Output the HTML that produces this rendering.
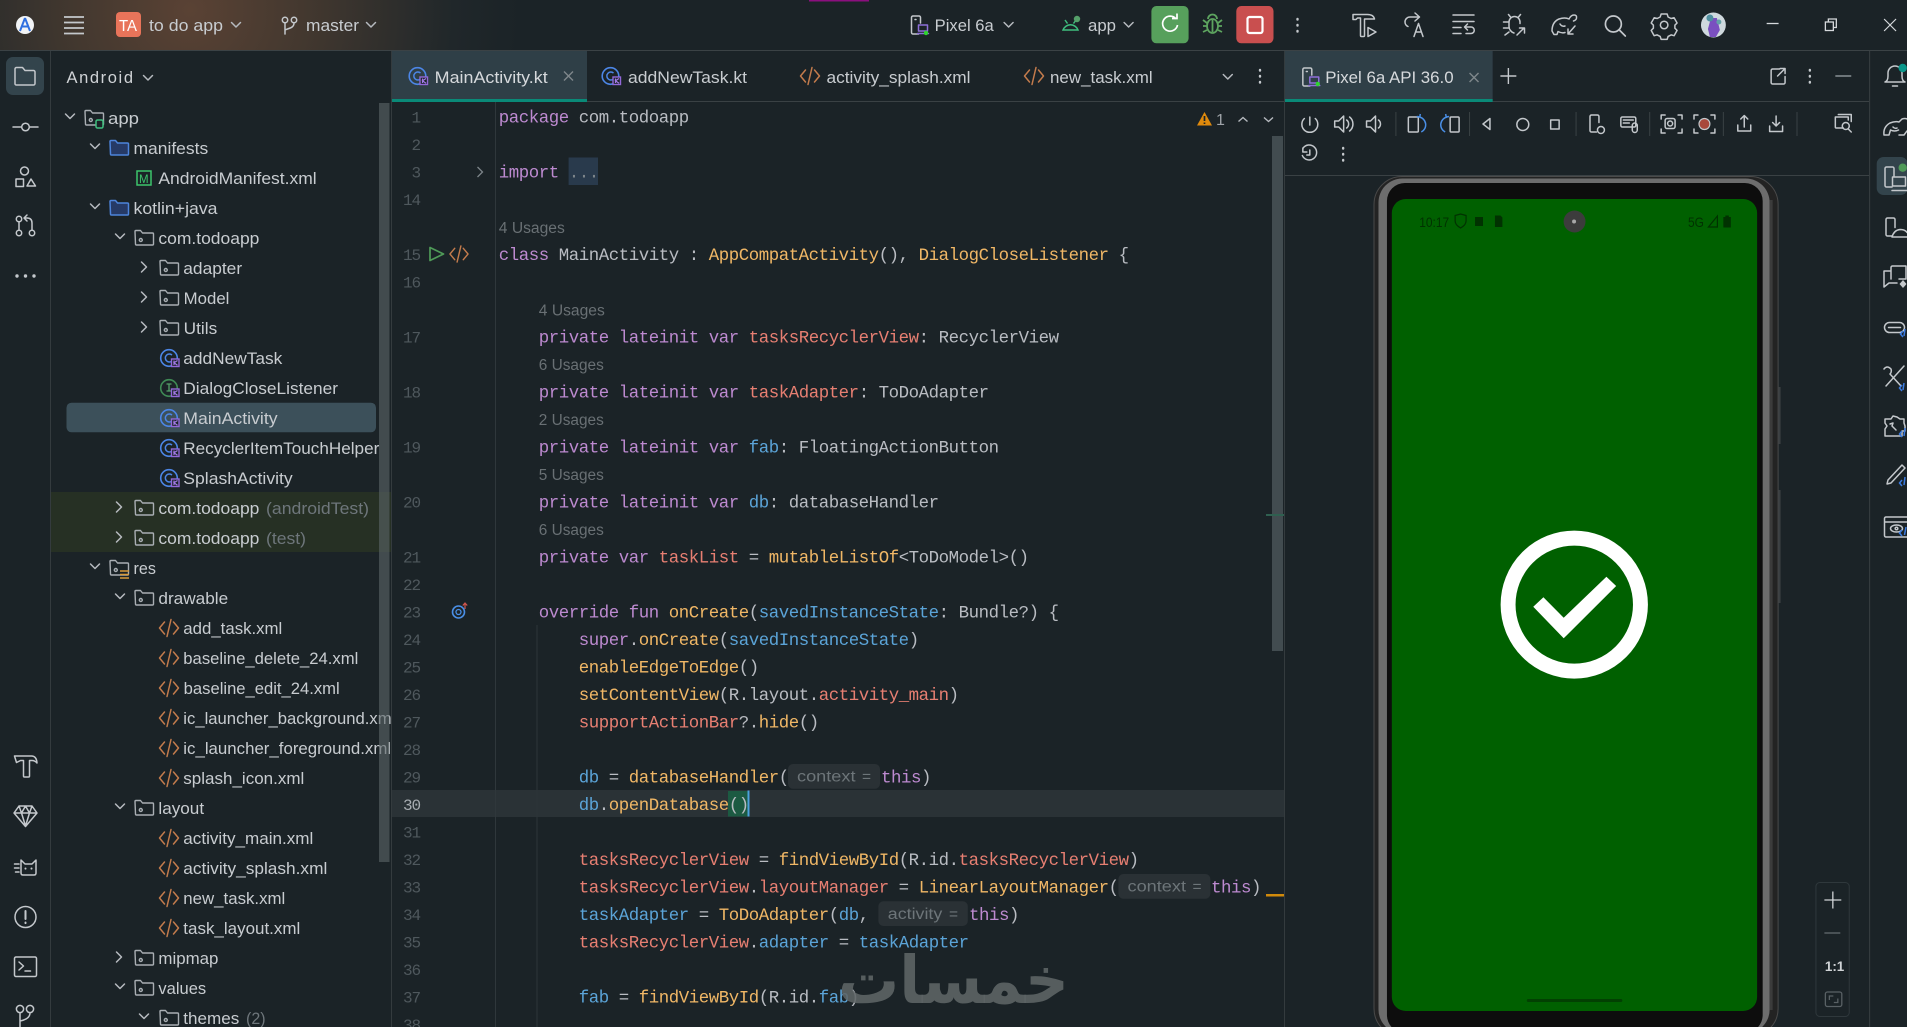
<!DOCTYPE html>
<html><head><meta charset="utf-8"><title>Android Studio</title>
<style>
html,body{margin:0;padding:0;background:#1b2327;width:1907px;height:1027px;overflow:hidden}
svg{display:block;position:absolute;left:0;top:0}
text{white-space:pre}
.u{font-family:"Liberation Sans",sans-serif;font-size:16.5px;fill:#c8ccd0}
.g{font-family:"Liberation Sans",sans-serif;font-size:16.5px;fill:#6e767b}
.m{font-family:"Liberation Mono",monospace;font-size:17.4px;letter-spacing:-.44px;fill:#b9bcc2}
.n{font-family:"Liberation Mono",monospace;font-size:16px;letter-spacing:-1.1px;fill:#4f585d;text-anchor:end}
.s{font-family:"Liberation Sans",sans-serif;font-size:15.5px;fill:#697074}
.h{font-family:"Liberation Sans",sans-serif;font-size:15.5px;fill:#6d7579}
.k{fill:#bd8ad0}.f{fill:#f0b766}.p{fill:#e77f72}.b{fill:#5ba4d8}
.i{fill:none;stroke:#c4c8cc;stroke-width:1.5;stroke-linecap:round;stroke-linejoin:round}
</style></head><body>
<svg width="1907" height="1027" viewBox="0 0 1907 1027" xmlns="http://www.w3.org/2000/svg">
<defs>
<radialGradient id="tb" gradientUnits="userSpaceOnUse" cx="190" cy="10" r="330">
<stop offset="0" stop-color="#5a4234"/><stop offset=".35" stop-color="#43382f"/><stop offset=".8" stop-color="#20272a"/><stop offset="1" stop-color="#1b2327"/></radialGradient>
<g id="pkg" fill="none" stroke="#a9aeb3" stroke-width="1.4" stroke-linejoin="round"><path d="M-9 -6.5a1 1 0 0 1 1-1h4.500l2 2.500h10a1 1 0 0 1 1 1v10a1 1 0 0 1-1 1h-16a1 1 0 0 1-1-1z"/><circle cx="-3.200" cy="2" r="1.500"/></g>
<g id="blue" stroke="#4d84db" stroke-width="1.500" fill="#263a66" stroke-linejoin="round"><path d="M-9 -6.500a1 1 0 0 1 1-1h4.500l2 2.500h10a1 1 0 0 1 1 1v10a1 1 0 0 1-1 1h-16a1 1 0 0 1-1-1z"/></g>
<g id="kc"><circle cx="-.5" cy="-1" r="8.300" fill="none" stroke="#4c86e6" stroke-width="1.600"/><path d="M2.500 -4a4 4 0 1 0 0 6" fill="none" stroke="#4c86e6" stroke-width="1.500"/><rect x="2" y="0" width="7.500" height="7.500" fill="#1b2327" stroke="#9268d8" stroke-width="1.400"/><path d="M4.500 1.500v4.500M8 1.500L4.500 3.800l3.500 2.400" fill="none" stroke="#a27ae6" stroke-width="1.200"/></g>
<g id="ki"><circle cx="-.5" cy="-1" r="8.300" fill="none" stroke="#3f8a55" stroke-width="1.600"/><path d="M-3 -5h5M-.5 -5v7M-3 2h5" fill="none" stroke="#55a06a" stroke-width="1.300"/><rect x="2" y="0" width="7.500" height="7.500" fill="#1b2327" stroke="#9268d8" stroke-width="1.400"/><path d="M4.500 1.500v4.500M8 1.500L4.500 3.800l3.500 2.400" fill="none" stroke="#a27ae6" stroke-width="1.200"/></g>
<g id="xml" fill="none" stroke="#c37b4c" stroke-width="1.500" stroke-linecap="round" stroke-linejoin="round"><path d="M-4.500 -6L-9.500 0L-4.500 6M4.500 -6L9.500 0L4.500 6M2 -8.500L-2 8.500"/></g>
<path id="cd" d="M-4.500 -2.500L0 2L4.500 -2.500" fill="none" stroke="#b6babf" stroke-width="1.500" stroke-linecap="round" stroke-linejoin="round"/>
<path id="cr" d="M-2.500 -5L2.500 0L-2.500 5" fill="none" stroke="#b6babf" stroke-width="1.500" stroke-linecap="round" stroke-linejoin="round"/>
<path id="dots" d="M0 -6v.6M0 0v.6M0 6v.6" fill="none" stroke="#c4c8cc" stroke-width="2.400" stroke-linecap="round"/>
<g id="dev" class="i" stroke-width="1.300"><path d="M-1.500 9H-7a1.500 1.500 0 0 1-1.500-1.500v-15A1.500 1.500 0 0 1-7 -9h6A1.500 1.500 0 0 1 .5 -7.500V-2M-5 -5.500h1"/><rect x="-1.500" y="0" width="9" height="6" stroke="#8d6fd8"/><path d="M-2.500 8.500h11" stroke="#8d6fd8"/></g>
</defs>

<rect width="1907" height="1027" fill="#1b2327"/>
<!-- title bar -->
<rect width="1907" height="50" fill="url(#tb)"/>
<rect y="50" width="1907" height="1" fill="#3b4245"/>
<rect x="809" y="0" width="60" height="1.500" fill="#8b0f7e"/>
<circle cx="25" cy="25" r="9" fill="#f2f4f6"/><path d="M25 18l-5 13M25 18l5 13M21.500 26.500h7" stroke="#2f6fe0" stroke-width="2" fill="none"/>
<path d="M64 17h20M64 22.500h20M64 28h20M64 33.500h20" stroke="#c4c8cc" stroke-width="1.700"/>
<rect x="116" y="12" width="25" height="25" rx="4" fill="#e8745a"/>
<text x="119" y="31" class="u" style="font-size:16px;fill:#fff" textLength="18" lengthAdjust="spacingAndGlyphs">TA</text>
<text x="149" y="31" class="u" textLength="74" lengthAdjust="spacingAndGlyphs">to do app</text>
<use href="#cd" x="236" y="25"/>
<g class="i" stroke-width="1.400"><circle cx="285" cy="20" r="2.700"/><circle cx="294" cy="20" r="2.700"/><path d="M285 23v11M294 23c0 5-5 5-9 7"/></g>
<text x="306" y="31" class="u" textLength="53" lengthAdjust="spacingAndGlyphs">master</text>
<use href="#cd" x="371" y="25"/>
<use href="#dev" x="920" y="25"/><circle cx="926" cy="33" r="2.200" fill="#2ed42e"/>
<text x="934.700" y="31" class="u" textLength="59" lengthAdjust="spacingAndGlyphs">Pixel 6a</text>
<use href="#cd" x="1008.600" y="25"/>
<g fill="none" stroke="#3fbf7f" stroke-width="1.500"><path d="M1063 30a8 8 0 0 1 15 0zM1065 20l2.500 3.500M1076 20l-2.500 3.500"/></g><circle cx="1077" cy="19" r="3.200" fill="#55a06a"/>
<text x="1088" y="31" class="u" textLength="28" lengthAdjust="spacingAndGlyphs">app</text>
<use href="#cd" x="1128.600" y="25"/>
<rect x="1151.400" y="6" width="37.200" height="37.300" rx="5" fill="#57a05c"/>
<path d="M1176 19a7.500 7.500 0 1 0 1.500 6M1172 18.500h5v-5" fill="none" stroke="#fff" stroke-width="1.700"/>
<g fill="none" stroke="#5da45f" stroke-width="1.800"><ellipse cx="1212.500" cy="26" rx="5.500" ry="7"/><path d="M1208 19a4.500 4.500 0 0 1 9 0M1203 20l4 3M1222 20l-4 3M1203 26h4M1222 26h-4M1203 32l4-2M1222 32l-4-2M1212.500 20v12"/></g>
<rect x="1236.300" y="6" width="37.200" height="37.300" rx="5" fill="#c94f4f"/>
<rect x="1247.500" y="17" width="15" height="16" rx="2" fill="none" stroke="#fff" stroke-width="2.200"/>
<use href="#dots" x="1297.500" y="25"/>
<!-- title right icons, absolute -->
<g class="i">
<path d="M1353 14.500v5h3l1.500-1.500h3v17.500q0 1 1 1h2q1 0 1-1V19h10q-1-4.500-7-4.500z"/><path d="M1368 27.500v9l8-4.500z"/>
<path d="M1419 17h-9a5 5 0 0 0-5 5a5 5 0 0 0 3 4.500M1415 13l4.500 4l-4.500 4M1414 36.500l4.500-13l4.500 13M1416 32h5"/>
<path d="M1453 15h21M1453 21.500h21M1453 27.500h8M1453 33.500h8M1465 27h6a3.200 3.200 0 0 1 0 6.500h-5M1467.500 24l-3 3l3 3"/>
<path d="M1514 33a7 7 0 0 1-5-7v-4a5.500 5.500 0 0 1 11 0v1.500M1510.500 17l-2-2.500M1518.500 17l2-2.500M1503.500 22h5M1503.500 28h5M1505 35l4-3M1517 35l7-7M1519.500 28h5v5"/>
<path d="M1552 31q0-9 7-12q6-2 10 0q2-4 5-4q3 0 2.500 3q0 2-3 3M1552 31l2 3.500h3l1-3q4 2 7 1M1560 24q2 3 5 2M1575 26l-7 8M1568 29v5h5"/>
</g>
<g transform="translate(1270 0) scale(.9953 1) translate(-1270 0)">
<circle cx="1615" cy="24" r="8" class="i" style="stroke-width:1.700"/><path d="M1621 30l6 6" class="i" style="stroke-width:1.700"/>
<g class="i"><circle cx="1666" cy="25" r="3.800"/><path d="M1663 14h6l1 3l3 1.500l3-.8l3 5.300l-2.200 2.200v3l2.200 2.200l-3 5.300l-3-.8l-3 1.500l-1 3h-6l-1-3l-3-1.500l-3 .8l-3-5.300l2.200-2.200v-3l-2.200-2.200l3-5.300l3 .8l3-1.500z"/></g>
<ellipse cx="1715.500" cy="25" rx="12.500" ry="12.500" fill="#cfd9de"/><path d="M1713 18h6l3 12l-4 7h-6l-2-8z" fill="#7a4fc0"/><circle cx="1712" cy="18" r="3.500" fill="#4f8fa0"/><circle cx="1721" cy="22" r="2.500" fill="#63a0a8"/>
<path d="M1769 23.500h12" stroke="#d6d9dc" stroke-width="1.300"/>
<g fill="none" stroke="#d6d9dc" stroke-width="1.300"><rect x="1828" y="22" width="8" height="8.500"/><path d="M1831 22v-3h8v8.500h-3"/></g>
<path d="M1887 19l12 12M1899 19l-12 12" stroke="#d6d9dc" stroke-width="1.200"/>
</g>

<!-- left strip -->
<rect x="50" y="51" width="1" height="976" fill="#343b3e"/>
<rect x="6" y="57" width="38" height="38" rx="7" fill="#33444c"/>
<g class="i"><path d="M15 69a1.500 1.500 0 0 1 1.500-1.500h6l2.500 3h8.500a1.500 1.500 0 0 1 1.500 1.500v11.500a1.500 1.500 0 0 1-1.500 1.500h-17A1.500 1.500 0 0 1 15 84z"/>
<circle cx="25.500" cy="127" r="3.800"/><path d="M13 127h8.500M29.500 127H38"/>
<circle cx="24.500" cy="171" r="4"/><rect x="16" y="179" width="7.500" height="7.500"/><path d="M31 179l4.500 7h-8.500z"/>
<circle cx="19" cy="219" r="2.700"/><circle cx="19" cy="233" r="2.700"/><circle cx="32" cy="233" r="2.700"/><path d="M19 222v8M32 230v-7q0-5-5-5h-2M27 215l-3 3l3 3"/>
<path d="M14.500 756h17q5 0 5.500 7q-2-2.500-5-2.500h-2.500V776q0 1-1 1h-4q-1 0-1-1v-15.500h-3l-4 2z"/>
<path d="M19 806h13l5 7l-11.500 13.500L14 813zM14 813h23M21.500 813l4 13l4-13M19 806l2.500 7l4-7l4 7l2.500-7"/>
<path d="M21 860l4 4h7l4-4v13q0 2-2 2H23q-2 0-2-2zM14.500 864h4.500M14.500 868h4.500M15.500 872h3.500"/><path d="M25.500 868.500v.1M31.500 868.500v.1" style="stroke-width:2"/>
<circle cx="25.500" cy="917" r="10.500"/><path d="M25.500 911v8M25.500 922.500v.6" style="stroke-width:2"/>
<rect x="14.500" y="957" width="22" height="19.500" rx="1.500"/><path d="M19 962l4.500 4l-4.500 4M25 971h5.500"/>
<circle cx="20" cy="1009" r="3.600"/><circle cx="30" cy="1009" r="3.600"/><path d="M20 1013v14M30 1013q0 6-10 8"/></g>
<g fill="#c4c8cc"><circle cx="17" cy="276" r="1.700"/><circle cx="25.500" cy="276" r="1.700"/><circle cx="34" cy="276" r="1.700"/></g>

<!-- project panel -->
<text x="66.500" y="83" class="u" style="font-size:16.500px;fill:#d0d3d6" textLength="66.500" lengthAdjust="spacing">Android</text>
<use href="#cd" x="148" y="78"/>
<rect x="51" y="492" width="340" height="60" fill="#263024"/>
<rect x="66.500" y="402.700" width="309.500" height="29.600" rx="5" fill="#3c505a"/>

<use href="#cd" x="70" y="116.500"/><use href="#pkg" x="94" y="118"/><rect x="96" y="120" width="7" height="8" rx="1.500" fill="#1b2327" stroke="#3fbf7f" stroke-width="1.500"/>
<text x="108" y="124" class="u" textLength="31" lengthAdjust="spacingAndGlyphs">app</text>
<use href="#cd" x="95" y="146.500"/><use href="#blue" x="119" y="148"/>
<text x="133.500" y="154" class="u" textLength="74.700" lengthAdjust="spacingAndGlyphs">manifests</text>
<rect x="137" y="171" width="14" height="14" fill="none" stroke="#3cc46c" stroke-width="1.500"/><text x="139" y="183" style="font:11.500px 'Liberation Sans',sans-serif;fill:#3cc46c">M</text>
<text x="158.400" y="184" class="u" textLength="158.300" lengthAdjust="spacingAndGlyphs">AndroidManifest.xml</text>
<use href="#cd" x="95" y="206.500"/><use href="#blue" x="119" y="208"/>
<text x="133.500" y="214" class="u" textLength="84" lengthAdjust="spacingAndGlyphs">kotlin+java</text>
<use href="#cd" x="120" y="236.500"/><use href="#pkg" x="144" y="238"/>
<text x="158.400" y="244" class="u" textLength="101" lengthAdjust="spacingAndGlyphs">com.todoapp</text>
<use href="#cr" x="144" y="267"/><use href="#pkg" x="169" y="268"/>
<text x="183.300" y="274" class="u" textLength="58.800" lengthAdjust="spacingAndGlyphs">adapter</text>
<use href="#cr" x="144" y="297"/><use href="#pkg" x="169" y="298"/>
<text x="183.700" y="304" class="u" textLength="45.700" lengthAdjust="spacingAndGlyphs">Model</text>
<use href="#cr" x="144" y="327"/><use href="#pkg" x="169" y="328"/>
<text x="183.700" y="334" class="u" textLength="33.500" lengthAdjust="spacingAndGlyphs">Utils</text>
<use href="#kc" x="169.500" y="359"/><text x="183.300" y="364" class="u" textLength="99" lengthAdjust="spacingAndGlyphs">addNewTask</text>
<use href="#ki" x="169.500" y="389"/><text x="183.300" y="394" class="u" textLength="154.700" lengthAdjust="spacingAndGlyphs">DialogCloseListener</text>
<use href="#kc" x="169.500" y="419"/><text x="183.300" y="424" class="u" textLength="94.300" lengthAdjust="spacingAndGlyphs">MainActivity</text>
<use href="#kc" x="169.500" y="449"/><text x="183.300" y="454" class="u" textLength="196" lengthAdjust="spacingAndGlyphs">RecyclerItemTouchHelper</text>
<use href="#kc" x="169.500" y="479"/><text x="183.300" y="484" class="u" textLength="109.400" lengthAdjust="spacingAndGlyphs">SplashActivity</text>
<use href="#cr" x="119" y="507"/><use href="#pkg" x="144" y="508"/>
<text x="158.400" y="514" class="u" textLength="101" lengthAdjust="spacingAndGlyphs">com.todoapp</text><text x="266" y="514" class="g" textLength="103" lengthAdjust="spacingAndGlyphs">(androidTest)</text>
<use href="#cr" x="119" y="537"/><use href="#pkg" x="144" y="538"/>
<text x="158.400" y="544" class="u" textLength="101" lengthAdjust="spacingAndGlyphs">com.todoapp</text><text x="266" y="544" class="g" textLength="40" lengthAdjust="spacingAndGlyphs">(test)</text>
<use href="#cd" x="95" y="566.500"/><use href="#pkg" x="119" y="568"/><path d="M120 571h9M120 574.500h9M120 578h9" stroke="#d89a3a" stroke-width="1.400"/>
<text x="133.500" y="574" class="u" textLength="22.400" lengthAdjust="spacingAndGlyphs">res</text>
<use href="#cd" x="120" y="596.500"/><use href="#pkg" x="144" y="598"/>
<text x="158.400" y="604" class="u" textLength="69.800" lengthAdjust="spacingAndGlyphs">drawable</text>
<use href="#xml" x="169" y="628"/><text x="183.300" y="634" class="u" textLength="99" lengthAdjust="spacingAndGlyphs">add_task.xml</text>
<use href="#xml" x="169" y="658"/><text x="183.300" y="664" class="u" textLength="175" lengthAdjust="spacingAndGlyphs">baseline_delete_24.xml</text>
<use href="#xml" x="169" y="688"/><text x="183.700" y="694" class="u" textLength="156" lengthAdjust="spacingAndGlyphs">baseline_edit_24.xml</text>
<use href="#xml" x="169" y="718"/><text x="183.300" y="724" class="u" textLength="212" lengthAdjust="spacingAndGlyphs">ic_launcher_background.xml</text>
<use href="#xml" x="169" y="748"/><text x="183.300" y="754" class="u" textLength="207.800" lengthAdjust="spacingAndGlyphs">ic_launcher_foreground.xml</text>
<use href="#xml" x="169" y="778"/><text x="183.300" y="784" class="u" textLength="121" lengthAdjust="spacingAndGlyphs">splash_icon.xml</text>
<use href="#cd" x="120" y="806.500"/><use href="#pkg" x="144" y="808"/>
<text x="158.400" y="814" class="u" textLength="45.700" lengthAdjust="spacingAndGlyphs">layout</text>
<use href="#xml" x="169" y="838"/><text x="183.300" y="844" class="u" textLength="130" lengthAdjust="spacingAndGlyphs">activity_main.xml</text>
<use href="#xml" x="169" y="868"/><text x="183.300" y="874" class="u" textLength="144" lengthAdjust="spacingAndGlyphs">activity_splash.xml</text>
<use href="#xml" x="169" y="898"/><text x="183.300" y="904" class="u" textLength="102" lengthAdjust="spacingAndGlyphs">new_task.xml</text>
<use href="#xml" x="169" y="928"/><text x="183.300" y="934" class="u" textLength="117" lengthAdjust="spacingAndGlyphs">task_layout.xml</text>
<use href="#cr" x="119" y="957"/><use href="#pkg" x="144" y="958"/>
<text x="158.400" y="964" class="u" textLength="60" lengthAdjust="spacingAndGlyphs">mipmap</text>
<use href="#cd" x="120" y="986.500"/><use href="#pkg" x="144" y="988"/>
<text x="158.400" y="994" class="u" textLength="47.800" lengthAdjust="spacingAndGlyphs">values</text>
<use href="#cd" x="144" y="1016.500"/><use href="#pkg" x="169" y="1018"/>
<text x="183.300" y="1024" class="u" textLength="56" lengthAdjust="spacingAndGlyphs">themes</text><text x="246" y="1024" class="g" textLength="19.600" lengthAdjust="spacingAndGlyphs">(2)</text>
<rect x="379" y="103" width="10.500" height="759" fill="#5a6468" opacity=".62"/>

<!-- editor area -->
<rect x="391" y="51" width="894" height="976" fill="#1b2327"/>
<rect x="391" y="51" width="1" height="976" fill="#343b3e"/>
<rect x="392" y="51" width="195" height="50" fill="#2f3f47"/>
<rect x="392" y="101" width="1478" height="1" fill="#3a4144"/>
<rect x="392" y="99" width="195" height="3" fill="#0a8a78"/>
<use href="#kc" x="418" y="77"/><text x="434.700" y="83" class="u" style="fill:#d6d9dc" textLength="113" lengthAdjust="spacingAndGlyphs">MainActivity.kt</text>
<path d="M564 71.500l9 9M573 71.500l-9 9" stroke="#7f878b" stroke-width="1.400"/>
<use href="#kc" x="611" y="77"/><text x="628" y="83" class="u" textLength="119" lengthAdjust="spacingAndGlyphs">addNewTask.kt</text>
<use href="#xml" x="810" y="76"/><text x="826.500" y="83" class="u" textLength="144" lengthAdjust="spacingAndGlyphs">activity_splash.xml</text>
<use href="#xml" x="1034" y="76"/><text x="1050" y="83" class="u" textLength="102.600" lengthAdjust="spacingAndGlyphs">new_task.xml</text>
<use href="#cd" x="1227.800" y="77"/><use href="#dots" x="1260" y="76"/>

<rect x="392" y="790" width="892" height="27" fill="#2a3236"/>
<rect x="495" y="102" width="1" height="925" fill="#2f373b"/>
<rect x="536.500" y="625" width="1" height="402" fill="#2c3438"/>
<rect x="728" y="791" width="20" height="25.500" fill="#1c5a42"/>
<rect x="747.500" y="790.500" width="2" height="26" fill="#4aa3dc"/>
<rect x="568.600" y="157.500" width="29.400" height="27.500" fill="#293a4c"/>

<!-- line numbers -->
<text x="420" y="122.500" class="n">1</text><text x="420" y="150" class="n">2</text><text x="420" y="177.500" class="n">3</text><text x="420" y="205" class="n">14</text>
<text x="420" y="260" class="n">15</text><text x="420" y="287.500" class="n">16</text><text x="420" y="342.500" class="n">17</text><text x="420" y="397.500" class="n">18</text><text x="420" y="452.500" class="n">19</text><text x="420" y="507.500" class="n">20</text><text x="420" y="562.500" class="n">21</text><text x="420" y="590" class="n">22</text><text x="420" y="617.500" class="n">23</text><text x="420" y="645" class="n">24</text><text x="420" y="672.500" class="n">25</text><text x="420" y="700" class="n">26</text><text x="420" y="727.500" class="n">27</text><text x="420" y="755" class="n">28</text><text x="420" y="782.500" class="n">29</text><text x="420" y="810" class="n" style="fill:#a8adb2">30</text><text x="420" y="837.500" class="n">31</text><text x="420" y="865" class="n">32</text><text x="420" y="892.500" class="n">33</text><text x="420" y="920" class="n">34</text><text x="420" y="947.500" class="n">35</text><text x="420" y="975" class="n">36</text><text x="420" y="1002.500" class="n">37</text><text x="420" y="1030" class="n">38</text>

<!-- gutter icons -->
<path d="M477.500 167l5 5l-5 5" fill="none" stroke="#7d858a" stroke-width="1.300"/>
<path d="M430 247.500l13.500 6.500l-13.500 6.500z" fill="none" stroke="#4f9a58" stroke-width="1.700" stroke-linejoin="round"/>
<g transform="translate(459 254) scale(.95)"><use href="#xml"/></g>
<circle cx="458.500" cy="612" r="6" fill="none" stroke="#4a8fe6" stroke-width="1.600"/><circle cx="458.500" cy="612" r="2.500" fill="none" stroke="#4a8fe6" stroke-width="1.300"/><path d="M465 609v-5.500M462.800 605.500l2.200-2.500l2.200 2.500" fill="none" stroke="#d1564e" stroke-width="1.200"/>

<!-- code -->
<text x="498.800" y="122.500" class="m"><tspan class="k">package</tspan> com.todoapp</text>
<text x="498.800" y="177.500" class="m"><tspan class="k">import</tspan> <tspan style="fill:#7d858a">...</tspan></text>
<text x="498.800" y="233" class="s" textLength="66" lengthAdjust="spacingAndGlyphs">4 Usages</text>
<text x="498.800" y="260" class="m"><tspan class="k">class</tspan> MainActivity : <tspan class="f">AppCompatActivity</tspan>(), <tspan class="f">DialogCloseListener</tspan> {</text>
<text x="538.800" y="315.500" class="s" textLength="66" lengthAdjust="spacingAndGlyphs">4 Usages</text>
<text x="538.800" y="342.500" class="m"><tspan class="k">private lateinit var</tspan> <tspan class="p">tasksRecyclerView</tspan>: RecyclerView</text>
<text x="538.800" y="370" class="s" textLength="65" lengthAdjust="spacingAndGlyphs">6 Usages</text>
<text x="538.800" y="397.500" class="m"><tspan class="k">private lateinit var</tspan> <tspan class="p">taskAdapter</tspan>: ToDoAdapter</text>
<text x="538.800" y="425" class="s" textLength="65" lengthAdjust="spacingAndGlyphs">2 Usages</text>
<text x="538.800" y="452.500" class="m"><tspan class="k">private lateinit var</tspan> <tspan class="b">fab</tspan>: FloatingActionButton</text>
<text x="538.800" y="480" class="s" textLength="65" lengthAdjust="spacingAndGlyphs">5 Usages</text>
<text x="538.800" y="507.500" class="m"><tspan class="k">private lateinit var</tspan> <tspan class="b">db</tspan>: databaseHandler</text>
<text x="538.800" y="535" class="s" textLength="65" lengthAdjust="spacingAndGlyphs">6 Usages</text>
<text x="538.800" y="562.500" class="m"><tspan class="k">private var</tspan> <tspan class="p">taskList</tspan> = <tspan class="f">mutableListOf</tspan>&lt;ToDoModel&gt;()</text>
<text x="538.800" y="617.500" class="m"><tspan class="k">override fun</tspan> <tspan class="f">onCreate</tspan>(<tspan class="b">savedInstanceState</tspan>: Bundle?) {</text>
<text x="578.800" y="645" class="m"><tspan class="k">super</tspan>.<tspan class="f">onCreate</tspan>(<tspan class="b">savedInstanceState</tspan>)</text>
<text x="578.800" y="672.500" class="m"><tspan class="f">enableEdgeToEdge</tspan>()</text>
<text x="578.800" y="700" class="m"><tspan class="f">setContentView</tspan>(R.layout.<tspan class="p">activity_main</tspan>)</text>
<text x="578.800" y="727.500" class="m"><tspan class="p">supportActionBar</tspan>?.<tspan class="f">hide</tspan>()</text>
<text x="578.800" y="782.500" class="m"><tspan class="b">db</tspan> = <tspan class="f">databaseHandler</tspan>(</text>
<rect x="788" y="764" width="92" height="24.700" rx="5" fill="#2a3135"/>
<text x="797" y="781.500" class="h" textLength="58.500" lengthAdjust="spacingAndGlyphs">context</text><text x="862" y="781.500" class="h">=</text>
<text x="881" y="782.500" class="m"><tspan class="k">this</tspan>)</text>
<text x="578.800" y="810" class="m"><tspan class="b">db</tspan>.<tspan class="f">openDatabase</tspan>()</text>
<text x="578.800" y="865" class="m"><tspan class="p">tasksRecyclerView</tspan> = <tspan class="f">findViewById</tspan>(R.id.<tspan class="p">tasksRecyclerView</tspan>)</text>
<text x="578.800" y="892.500" class="m"><tspan class="p">tasksRecyclerView</tspan>.<tspan class="p">layoutManager</tspan> = <tspan class="f">LinearLayoutManager</tspan>(</text>
<rect x="1118.400" y="874" width="92" height="24.700" rx="5" fill="#2a3135"/>
<text x="1127.500" y="891.500" class="h" textLength="58.500" lengthAdjust="spacingAndGlyphs">context</text><text x="1192.500" y="891.500" class="h">=</text>
<text x="1211" y="892.500" class="m"><tspan class="k">this</tspan>)</text>
<text x="578.800" y="920" class="m"><tspan class="b">taskAdapter</tspan> = <tspan class="f">ToDoAdapter</tspan>(<tspan class="b">db</tspan>,</text>
<rect x="878.400" y="901.300" width="89.400" height="24.700" rx="5" fill="#2a3135"/>
<text x="887.800" y="919" class="h" textLength="54.500" lengthAdjust="spacingAndGlyphs">activity</text><text x="949" y="919" class="h">=</text>
<text x="969" y="920" class="m"><tspan class="k">this</tspan>)</text>
<text x="578.800" y="947.500" class="m"><tspan class="p">tasksRecyclerView</tspan>.<tspan class="b">adapter</tspan> = <tspan class="b">taskAdapter</tspan></text>
<text x="578.800" y="1002.500" class="m"><tspan class="b">fab</tspan> = <tspan class="f">findViewById</tspan>(R.id.<tspan class="b">fab</tspan>)</text>

<!-- editor top-right -->
<path d="M1204.500 112l7.500 13.500h-15z" fill="#e08a0c"/><path d="M1204.500 116v5M1204.500 122.500v1.500" stroke="#1b2327" stroke-width="1.700"/>
<text x="1216" y="125" class="u" style="font-size:16px;fill:#9ea3a8">1</text>
<path d="M1238.500 121.500l4.500-4l4.500 4M1264 117.500l4.500 4l4.500-4" fill="none" stroke="#b6babf" stroke-width="1.400"/>
<rect x="1272" y="136" width="11" height="515" fill="#424c50"/>
<rect x="1266" y="514" width="18" height="2" fill="#2f6050"/>
<rect x="1266" y="894" width="18" height="2.500" fill="#d18a0b"/>
<rect x="1284" y="51" width="1" height="976" fill="#343b3e"/>

<!-- device panel -->
<g transform="translate(1270 0) scale(.9953 1) translate(-1270 0)">
<rect x="1285" y="51" width="208.700" height="50" fill="#2f3f47"/>
<rect x="1285" y="99" width="208.700" height="3" fill="#0a8a78"/>
<use href="#dev" x="1311.500" y="77"/><circle cx="1318" cy="84" r="2.200" fill="#2ed42e"/>
<text x="1325.500" y="83" class="u" style="fill:#d6d9dc" textLength="129" lengthAdjust="spacingAndGlyphs">Pixel 6a API 36.0</text>
<path d="M1470.500 73l9 9M1479.500 73l-9 9" stroke="#7f878b" stroke-width="1.400"/>
<path d="M1501.500 76h16M1509.500 68v16" stroke="#c4c8cc" stroke-width="1.400"/>
<g class="i"><path d="M1782 69h-7a1.500 1.500 0 0 0-1.500 1.500v12a1.500 1.500 0 0 0 1.500 1.500h11a1.500 1.500 0 0 0 1.500-1.500v-6M1780 76l7.500-7.500M1782.500 68.500h5v5"/></g>
<use href="#dots" x="1812.400" y="76"/>
<path d="M1838 76h16" stroke="#6d7579" stroke-width="2"/>

<!-- device toolbar -->
<g class="i">
<path d="M1310 117v8M1304.500 118.500a8 8 0 1 0 11 0"/>
<path d="M1335 121h4l5-5v16l-5-5h-4zM1347 120a5 5 0 0 1 0 8M1350 117a9 9 0 0 1 0 14"/>
<path d="M1367 121h4l5-5v16l-5-5h-4zM1379 120a5 5 0 0 1 0 8"/>
<rect x="1409" y="117" width="10" height="15" rx="1"/>
<rect x="1451" y="117" width="9" height="15" rx="1"/>
<path d="M1491 118.500v11l-7-5.500z"/><circle cx="1524" cy="124.500" r="6"/><rect x="1552" y="120" width="8.500" height="9"/>
<path d="M1598 132h-5a1.500 1.500 0 0 1-1.500-1.500v-14a1.500 1.500 0 0 1 1.500-1.500h6a1.500 1.500 0 0 1 1.500 1.500v6"/><circle cx="1602.500" cy="130" r="3.500"/>
<rect x="1622.500" y="117" width="15" height="10" rx="1.500"/><path d="M1625 120h10M1625 123h6"/><rect x="1634" y="123" width="5" height="9.500" rx="2.500"/>
<path d="M1663 119v-4h4M1680 115h4v4M1684 129v4h-4M1667 133h-4v-4"/><rect x="1667" y="118.500" width="10" height="10" rx="2"/><circle cx="1672" cy="123.500" r="2.500"/>
<path d="M1696 119v-4h4M1713 115h4v4M1717 129v4h-4M1700 133h-4v-4"/>
<path d="M1740 125v6h13v-6M1746.500 127v-11M1743 119l3.500-3.500l3.500 3.500"/>
<path d="M1772 126v5.500h13V126M1778.500 116v10M1775 122.500l3.500 3.500l3.500-3.500"/>
<path d="M1846 128h-7a1 1 0 0 1-1-1v-10h13v3M1841 114.500h13v7"/><circle cx="1848.500" cy="126" r="3.500"/><path d="M1851 129l3 3"/>
<path d="M1303 148.500a7.500 7.500 0 1 1-.5 7M1303 148v4h4M1310 150v5h-3"/>
</g>
<path d="M1420 117a8 8 0 0 1 2 15M1417.500 116.500l3 .5l.5-3" fill="none" stroke="#4a8fe6" stroke-width="1.500"/>
<path d="M1448 117a8 8 0 0 0-2 15M1450 116.500l-3 .5l-.5-3" fill="none" stroke="#4a8fe6" stroke-width="1.500"/>
<circle cx="1706.500" cy="124" r="5.500" fill="#a8483c" stroke="#c4c8cc" stroke-width="1.200"/>
<g fill="#3a4245"><rect x="1396" y="112" width="1" height="24"/><rect x="1470" y="112" width="1" height="24"/><rect x="1577" y="112" width="1" height="24"/><rect x="1651" y="112" width="1" height="24"/><rect x="1725" y="112" width="1" height="24"/><rect x="1799" y="112" width="1" height="24"/></g>
<use href="#dots" x="1343.500" y="154"/>
<rect x="1285" y="175" width="587" height="1" fill="#3a4144"/>
<rect x="1872" y="51" width="1" height="976" fill="#343b3e"/>

<!-- phone -->
<rect x="1374.500" y="176.500" width="406" height="860" rx="28" fill="#232323" stroke="#4a4a4a" stroke-width="1"/>
<rect x="1379" y="178.500" width="393" height="855" rx="24" fill="#6d6d6d"/>
<rect x="1772" y="200" width="3" height="810" fill="#3b3b3b"/>
<rect x="1387.500" y="183" width="377.500" height="850" rx="18" fill="#0d0d0d"/>
<rect x="1392.400" y="199" width="367" height="812" rx="14" fill="#006000"/>
<rect x="1781" y="387" width="2" height="57" fill="#3a3f42"/><rect x="1781" y="490" width="2" height="113" fill="#3a3f42"/>
<text x="1420" y="227" style="font:14px 'Liberation Sans',sans-serif;fill:#013201" textLength="30" lengthAdjust="spacingAndGlyphs">10:17</text>
<path d="M1456 215.500l5.500-1.500l5.500 1.500v5c0 4-3 6-5.500 7.500c-2.500-1.500-5.500-3.500-5.500-7.500z" fill="none" stroke="#013201" stroke-width="1.200"/>
<rect x="1476" y="217" width="8" height="9" fill="#013201"/>
<path d="M1496 215.500h5.500l2 2v9.500h-7.500z" fill="#013201"/>
<circle cx="1576" cy="221.500" r="11" fill="#3c3c3c"/><circle cx="1575.500" cy="221.500" r="2" fill="#a8a8a8"/>
<text x="1690" y="227" style="font:13.500px 'Liberation Sans',sans-serif;fill:#013201" textLength="16" lengthAdjust="spacingAndGlyphs">5G</text>
<path d="M1710.500 227l9-11v11z" fill="none" stroke="#013201" stroke-width="1.200"/>
<path d="M1727.500 217v-1.500h3.500v1.500h2v10.500h-7.500V217z" fill="#013201"/>
<circle cx="1575.700" cy="604.600" r="66.500" fill="none" stroke="#fff" stroke-width="15"/>
<path d="M1534.500 606.700L1544.700 597.300L1565.100 617.700L1608 576.700L1617.800 586L1565.100 638.300z" fill="#fff"/>
<rect x="1528" y="999" width="96" height="3" rx="1.500" fill="#024002"/>

<!-- zoom control -->
<rect x="1818.500" y="882.500" width="33.500" height="134" rx="4" fill="#1b2327" stroke="#2f383c"/>
<path d="M1827 900h17M1835.500 891.500v17" stroke="#d0d3d6" stroke-width="1.300"/>
<path d="M1827 933h16" stroke="#596165" stroke-width="1.400"/>
<text x="1827.500" y="971" style="font:bold 13.500px 'Liberation Sans',sans-serif;fill:#d0d3d6">1:1</text>
<rect x="1828" y="992" width="16.500" height="14.500" rx="2" fill="none" stroke="#596165" stroke-width="1.300"/><path d="M1832 1000v-4h4M1840.500 998.500v4h-4" fill="none" stroke="#596165" stroke-width="1.300"/>
</g>

<!-- right strip, absolute coordinates -->
<rect x="1876.700" y="157" width="31" height="38" rx="7" fill="#33444c"/>
<g class="i">
<path d="M1885 82q3-1 3-6v-3a7 7 0 0 1 14 0v3q0 5 3 6zM1892.500 86h5"/>
<path d="M1884 135q-1-8 6-12q5-2 9-1l3-3q3-1 5 0M1884 135h5l1.500-5q4 2 8 0M1893 127q2 2 4 1M1899 135h5l3-4"/>
<path d="M1892 187h-5.500a1.500 1.500 0 0 1-1.500-1.500v-17a1.500 1.500 0 0 1 1.500-1.500h6a1.500 1.500 0 0 1 1.500 1.500v8M1892.500 177h13v9h-13zM1892 190.500h15"/>
<path d="M1892 236h-4.500a1.500 1.500 0 0 1-1.500-1.500v-15a1.500 1.500 0 0 1 1.500-1.500h6a1.500 1.500 0 0 1 1.500 1.500v8M1892 237q2-7 8-7.500q5 0 7 3M1892 237h15"/>
<path d="M1891 279v-11.500a1.500 1.500 0 0 1 1.500-1.500H1906v13h-7M1891 271h-7v16l5-4h8"/>
<rect x="1884.500" y="322.500" width="20" height="10" rx="5"/><path d="M1888.500 327.500h12"/>
<path d="M1884 369q3-4 7 0q1 3-1 5l11 12M1904 366l-18 20"/>
<path d="M1885 419h6l2-3l4 1l3 2h4v4l1 3v5h-3v5h-17v-7l2-3l-2-3z"/><path d="M1892 426l4 4M1890 424l3-1l-1 3"/>
<path d="M1887 484l1-4l14-15l3 3l-14 15z"/>
<path d="M1907 517h-21a1.500 1.500 0 0 0-1.500 1.500v17a1.500 1.500 0 0 0 1.500 1.500h21M1885 522h22"/><ellipse cx="1896.500" cy="528.500" rx="6" ry="3.500"/><circle cx="1896.500" cy="528.500" r="1.300"/>
</g>
<path d="M1903 331l-2.500 3l2.500 3M1905 329l-1 7M1902 385l-2.500 3l2.500 3M1904 383l-1 7M1902 431l-2.500 3l2.500 3M1905 428l-1 8M1902 480l-2.500 3l2.500 3M1905 477l-1 8M1902 530l-2.500 3l2.500 3M1906 527l-1.500 8" fill="none" stroke="#3b7be0" stroke-width="1.500"/>
<path d="M1903 280l3.500 4l-3.500 4l-3.500-4z" fill="#c4c8cc"/>
<circle cx="1902.700" cy="68" r="4.200" fill="#0a968a"/>
<circle cx="1902.700" cy="167.700" r="4.200" fill="#4f9a58"/>
<rect x="1869" y="51" width="1" height="976" fill="#343b3e"/>

<!-- watermark -->
<text x="838" y="1003" style="font:bold 66px 'DejaVu Sans',sans-serif;fill:#5e6567;fill-opacity:.88" textLength="231" lengthAdjust="spacingAndGlyphs">خمسات</text>
</svg>
</body></html>
